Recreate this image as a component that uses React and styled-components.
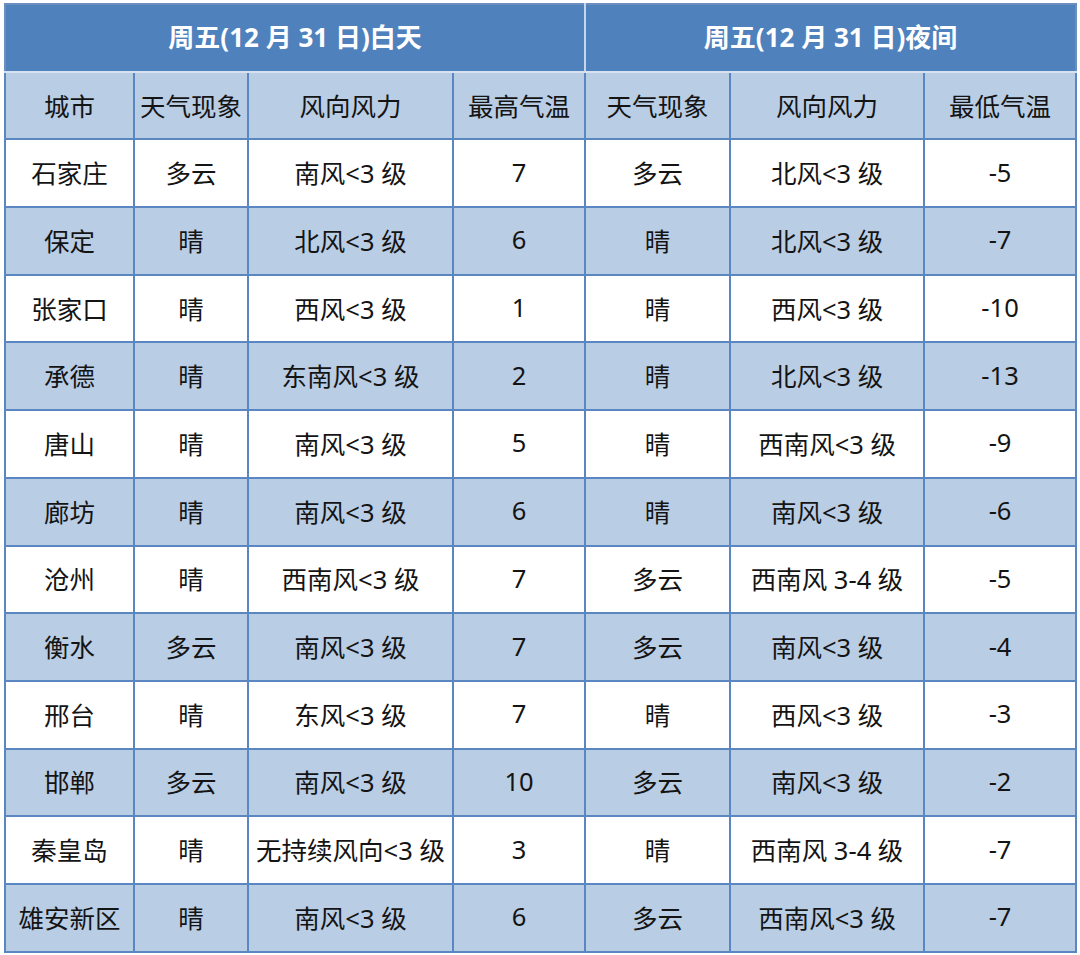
import styled, { createGlobalStyle } from "styled-components";

const GlobalStyle = createGlobalStyle`
  html, body {
    margin: 0;
    padding: 0;
    background: #ffffff;
  }
  body {
    font-family: "Noto Sans", "Noto Sans CJK SC", sans-serif;
  }
`;

const colWidths = [129, 114, 205, 132, 145, 194, 152];

const rows = [
  ["石家庄", "多云", "南风<3 级", "7", "多云", "北风<3 级", "-5"],
  ["保定", "晴", "北风<3 级", "6", "晴", "北风<3 级", "-7"],
  ["张家口", "晴", "西风<3 级", "1", "晴", "西风<3 级", "-10"],
  ["承德", "晴", "东南风<3 级", "2", "晴", "北风<3 级", "-13"],
  ["唐山", "晴", "南风<3 级", "5", "晴", "西南风<3 级", "-9"],
  ["廊坊", "晴", "南风<3 级", "6", "晴", "南风<3 级", "-6"],
  ["沧州", "晴", "西南风<3 级", "7", "多云", "西南风 3-4 级", "-5"],
  ["衡水", "多云", "南风<3 级", "7", "多云", "南风<3 级", "-4"],
  ["邢台", "晴", "东风<3 级", "7", "晴", "西风<3 级", "-3"],
  ["邯郸", "多云", "南风<3 级", "10", "多云", "南风<3 级", "-2"],
  ["秦皇岛", "晴", "无持续风向<3 级", "3", "晴", "西南风 3-4 级", "-7"],
  ["雄安新区", "晴", "南风<3 级", "6", "多云", "西南风<3 级", "-7"],
];

const headers = ["城市", "天气现象", "风向风力", "最高气温", "天气现象", "风向风力", "最低气温"];

const Page = styled.div`
  padding: 3px 0 0 4px;
`;

const Table = styled.table`
  width: 1072px;
  table-layout: fixed;
  border-collapse: collapse;
  border: 2px solid #6a8fbf;
`;

const Row = styled.tr`
  height: 67.7px;
  background: ${(p) => (p.$shaded ? "#b9cde5" : "#ffffff")};
`;

const TitleRow = styled.tr`
  height: 67.7px;
  background: #4f81bd;
`;

const Title = styled.th`
  color: #ffffff;
  font-size: 26px;
  font-weight: 700;
  text-align: center;
  padding: 0 0 3px;
  border-right: 2px solid #c7d6ea;
  border-bottom: 2px solid #d6e2f1;
  &:last-child {
    border-right: 2px solid #6a8fbf;
  }
`;

const Cell = styled.td`
  border: 2px solid #5a87c1;
  color: #141414;
  font-size: 25.5px;
  text-align: center;
  padding: 0 0 3px;
  white-space: nowrap;
`;

function App() {
  return (
    <>
      <GlobalStyle />
      <Page>
        <Table>
          <colgroup>
            {colWidths.map((w, i) => (
              <col key={i} style={{ width: w }} />
            ))}
          </colgroup>
          <thead>
            <TitleRow>
              <Title colSpan={4}>周五(12 月 31 日)白天</Title>
              <Title colSpan={3}>周五(12 月 31 日)夜间</Title>
            </TitleRow>
          </thead>
          <tbody>
            <Row $shaded>
              {headers.map((h, i) => (
                <Cell key={i}>{h}</Cell>
              ))}
            </Row>
            {rows.map((r, i) => (
              <Row key={i} $shaded={i % 2 === 1}>
                {r.map((c, j) => (
                  <Cell key={j}>{c}</Cell>
                ))}
              </Row>
            ))}
          </tbody>
        </Table>
      </Page>
    </>
  );
}

export default App;
